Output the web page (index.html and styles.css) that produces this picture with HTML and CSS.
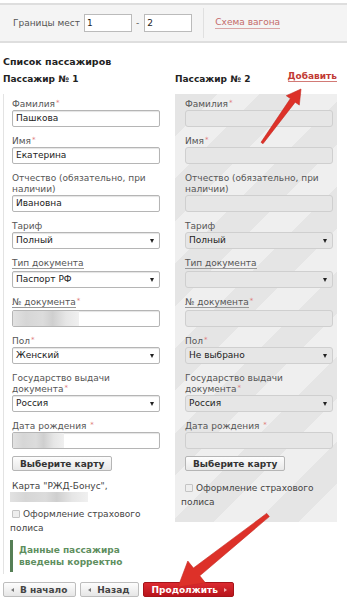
FILE: index.html
```html
<!DOCTYPE html>
<html lang="ru">

<head>
    <meta charset="UTF-8">
    <meta name="viewport" content="width=device-width, initial-scale=1.0">
    <title>Список пассажиров</title>
    <link rel="stylesheet" href="styles.css">
</head>

<body>
    <div class="page">
        <div class="seats">
            <span class="seats-label">Границы мест</span>
            <input class="seat-input" type="text" value="1">
            <span class="dash">-</span>
            <input class="seat-input" type="text" value="2">
            <span class="sep"></span>
            <a class="scheme" href="#">Схема вагона</a>
        </div>

        <h2 class="list-title">Список пассажиров</h2>

        <div class="pass-head">
            <div class="pass-name">Пассажир № 1</div>
            <div class="pass-name head-two">Пассажир № 2 <a class="add" href="#">Добавить</a></div>
        </div>

        <div class="passengers">
            <div class="pass pass-one">
                <div class="fields">
                    <div class="field">
                        <label>Фамилия<span class="req">*</span></label>
                        <div class="input">Пашкова</div>
                    </div>
                    <div class="field">
                        <label>Имя<span class="req">*</span></label>
                        <div class="input">Екатерина</div>
                    </div>
                    <div class="field">
                        <label>Отчество (обязательно, при наличии)</label>
                        <div class="input">Ивановна</div>
                    </div>
                    <div class="field">
                        <label>Тариф</label>
                        <div class="input select"><span>Полный</span><i class="caret"></i></div>
                    </div>
                    <div class="field">
                        <label><span class="hint">Тип документа</span></label>
                        <div class="input select"><span>Паспорт РФ</span><i class="caret"></i></div>
                    </div>
                    <div class="field">
                        <label><span class="hint">№ документа</span><span class="req">*</span></label>
                        <div class="input"><span class="blur doc-blur"></span></div>
                    </div>
                    <div class="field">
                        <label>Пол<span class="req">*</span></label>
                        <div class="input select"><span>Женский</span><i class="caret"></i></div>
                    </div>
                    <div class="field">
                        <label><span>Государство выдачи</span><br><span>документа</span><span class="req">*</span></label>
                        <div class="input select"><span>Россия</span><i class="caret"></i></div>
                    </div>
                    <div class="field">
                        <label>Дата рождения <span class="req">*</span></label>
                        <div class="input"><span class="blur date-blur"></span></div>
                    </div>
                </div>
                <button class="card-btn">Выберите карту</button>
                <p class="card-text">Карта "РЖД-Бонус",</p>
                <div class="blur card-blur"></div>
                <p class="insure"><span class="check"></span>Оформление страхового полиса</p>
                <div class="ok-note">Данные пассажира<br>введены корректно</div>
            </div>

            <div class="pass pass-two">
                <div class="fields">
                    <div class="field">
                        <label>Фамилия<span class="req">*</span></label>
                        <div class="input"></div>
                    </div>
                    <div class="field">
                        <label>Имя<span class="req">*</span></label>
                        <div class="input"></div>
                    </div>
                    <div class="field">
                        <label>Отчество (обязательно, при наличии)</label>
                        <div class="input"></div>
                    </div>
                    <div class="field">
                        <label>Тариф</label>
                        <div class="input select"><span>Полный</span><i class="caret"></i></div>
                    </div>
                    <div class="field">
                        <label><span class="hint">Тип документа</span></label>
                        <div class="input select"><span></span><i class="caret"></i></div>
                    </div>
                    <div class="field">
                        <label><span class="hint">№ документа</span><span class="req">*</span></label>
                        <div class="input"></div>
                    </div>
                    <div class="field">
                        <label>Пол<span class="req">*</span></label>
                        <div class="input select"><span>Не выбрано</span><i class="caret"></i></div>
                    </div>
                    <div class="field">
                        <label><span>Государство выдачи</span><br><span>документа</span><span class="req">*</span></label>
                        <div class="input select"><span>Россия</span><i class="caret"></i></div>
                    </div>
                    <div class="field">
                        <label>Дата рождения <span class="req">*</span></label>
                        <div class="input"></div>
                    </div>
                </div>
                <button class="card-btn">Выберите карту</button>
                <p class="insure"><span class="check"></span>Оформление страхового полиса</p>
            </div>
        </div>

        <div class="nav">
            <button class="nav-btn"><span class="tri-left"></span>В начало</button>
            <button class="nav-btn"><span class="tri-left"></span>Назад</button>
            <button class="nav-btn next">Продолжить<span class="tri-right"></span></button>
        </div>

        <svg class="arrows" width="347" height="600" viewBox="0 0 347 600">
            <polygon points="261,139.3 290.4,95.6 286.3,92.7 301,86 299.3,102.1 295.2,99.2 263,140.7" />
            <polygon points="266.7,510.4 193.45,565 187.8,558 178,584 205.4,579.8 199.75,572.8 269.3,513.6" />
        </svg>
    </div>
</body>

</html>
```

FILE: styles.css
```css
* {
    margin: 0;
    padding: 0;
    box-sizing: border-box;
    font-family: "DejaVu Sans", Verdana, sans-serif;
}

body {
    width: 347px;
    height: 600px;
    background-color: #fff;
    color: #444;
    font-size: 9px;
    overflow: hidden;
}

.page {
    position: relative;
    height: 600px;
}

/* seat range bar */
.seats {
    margin-top: 3px;
    height: 40px;
    display: flex;
    align-items: center;
    padding-left: 13px;
    background-color: #f4f4f4;
    border-top: 2px solid #dedede;
    border-bottom: 2px solid #dedede;
}

.seats-label {
    color: #555;
    margin-right: 4px;
}

.seat-input {
    width: 48px;
    height: 18px;
    border: 1px solid #bbb;
    background-color: #fff;
    font-size: 9px;
    padding-left: 2px;
    color: #222;
}

.dash {
    margin: 0 5px 0 4px;
    color: #555;
}

.sep {
    width: 1px;
    height: 30px;
    background-color: #e0e0e0;
    margin: 0 11px;
}

.scheme {
    color: #c46a6a;
    text-decoration: none;
    border-bottom: 1px solid #d9a5a5;
    line-height: 11px;
}

.list-title {
    margin: 12px 0 0 3px;
    font-size: 9.5px;
    line-height: 13px;
    color: #222;
}

.pass-head {
    display: grid;
    grid-template-columns: 172px 162px;
    padding-left: 3px;
    margin-top: 5px;
}

.pass-name {
    font-weight: bold;
    color: #222;
    line-height: 12px;
}

.head-two {
    display: flex;
    justify-content: space-between;
}

.add {
    color: #c23a35;
    text-decoration: none;
    border-bottom: 1px solid #d27a76;
    line-height: 10px;
    margin-top: -2px;
    height: 11px;
}

/* passenger columns */
.passengers {
    display: grid;
    grid-template-columns: 172px 162px;
    padding-left: 3px;
    margin-top: 9px;
    align-items: start;
}

.pass-one {
    border-left: 1px solid #e3e3e3;
    padding: 5px 0 2px 8px;
}

.pass-two {
    padding: 5px 0 13px 10px;
    background: repeating-linear-gradient(135deg, #e5e5e5 0 30px, #efefef 30px 60px);
}

.field {
    margin-bottom: 9px;
}

.field:last-child {
    margin-bottom: 7px;
}

.field label {
    display: block;
    width: 144px;
    line-height: 11px;
    color: #555;
}

.hint {
    border-bottom: 1px solid #999;
    display: inline-block;
    line-height: 10px;
    margin-bottom: 2px;
}

.req {
    color: #e07a7a;
    font-size: 7px;
    vertical-align: 2px;
    line-height: 0;
    margin-left: 1px;
}

.input {
    width: 148px;
    height: 17px;
    border: 1px solid #b5b5b5;
    border-radius: 2px;
    background-color: #fff;
    box-shadow: inset 0 1px 1px #e4e4e4;
    color: #222;
    line-height: 15px;
    padding-left: 3px;
    display: flex;
    align-items: center;
    overflow: hidden;
}

.pass-two .input {
    background-color: #e6e6e6;
    border-color: #cfcfcf;
    border-radius: 3px;
    box-shadow: none;
}

.select {
    justify-content: space-between;
    padding-right: 5px;
}

.caret {
    width: 0;
    height: 0;
    border-top: 4px solid #222;
    border-left: 2px solid transparent;
    border-right: 2px solid transparent;
}

.blur {
    display: block;
    background: linear-gradient(90deg, #e2e2e2 0, #d6d6d6 20%, #dcdcdc 45%, #cfcfcf 60%, #e6e6e6 80%, #f0f0f0 100%);
}

.doc-blur {
    width: 66px;
    height: 17px;
    margin-left: -3px;
}

.date-blur {
    width: 51px;
    height: 17px;
    margin-left: -3px;
}

.card-btn {
    display: block;
    height: 15px;
    padding: 0 7px;
    font-size: 9px;
    font-weight: bold;
    color: #333;
    border: 1px solid #b5b5b5;
    border-radius: 2px;
    background: linear-gradient(#fdfdfd, #e8e8e8);
}

.card-text {
    margin-top: 10px;
    line-height: 11px;
}

.card-blur {
    width: 78px;
    height: 10px;
    margin-left: -2px;
}

.insure {
    margin-top: 5px;
    line-height: 14px;
    margin-left: -2px;
    text-indent: 2px;
}

.pass-two .insure {
    margin-top: 10px;
    margin-left: -4px;
    text-indent: 4px;
    width: 140px;
}

.check {
    display: inline-block;
    width: 8px;
    height: 8px;
    border: 1px solid #c4c4c4;
    border-radius: 1px;
    background-color: #eee;
    margin-right: 3px;
    vertical-align: -1px;
}

.ok-note {
    margin: 5px 0 0 -2px;
    border-left: 3px solid #567f56;
    padding: 4px 0 4px 6px;
    line-height: 12px;
    font-weight: bold;
    color: #5f8f5f;
}

/* bottom navigation */
.nav {
    display: flex;
    gap: 4px;
    padding-left: 3px;
    margin-top: 8px;
}

.nav-btn {
    height: 15px;
    padding: 0 8px 0 7px;
    font-size: 9px;
    font-weight: bold;
    color: #444;
    border: 1px solid #bdbdbd;
    border-radius: 2px;
    background: linear-gradient(#fdfdfd, #e6e6e6);
    display: flex;
    align-items: center;
}

.nav-btn.next {
    color: #fff;
    border-color: #a5141a;
    background: linear-gradient(#dc2a30, #b8151c);
    padding: 0 6px 0 8px;
}

.tri-left {
    width: 0;
    height: 0;
    border-right: 3px solid #777;
    border-top: 2.5px solid transparent;
    border-bottom: 2.5px solid transparent;
    margin-right: 6px;
}

.tri-right {
    width: 0;
    height: 0;
    border-left: 3px solid #f3b0b0;
    border-top: 2.5px solid transparent;
    border-bottom: 2.5px solid transparent;
    margin-left: 6px;
}

.arrows {
    position: absolute;
    top: 0;
    left: 0;
    pointer-events: none;
}

.arrows polygon {
    fill: #dd3129;
    stroke: #c42a22;
    stroke-width: 0.6;
    stroke-linejoin: round;
}
```
